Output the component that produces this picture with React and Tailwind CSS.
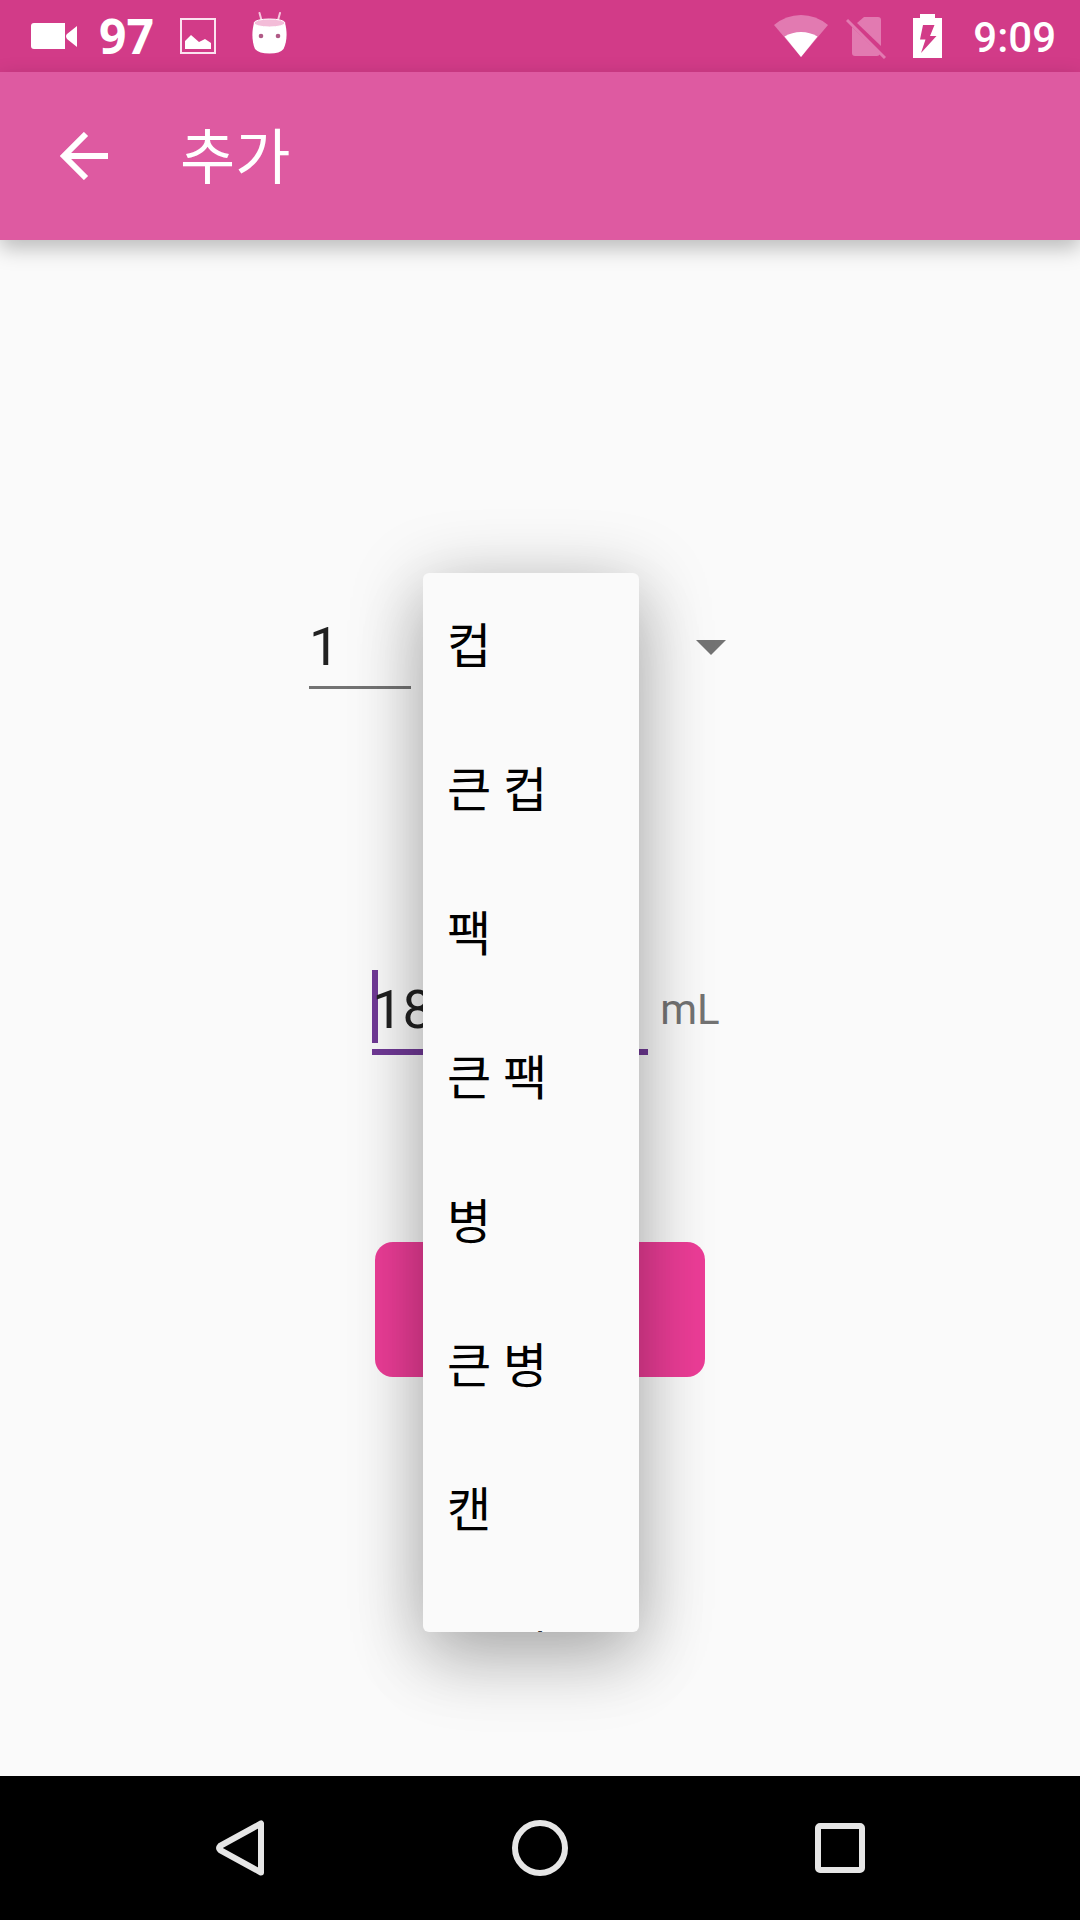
import { useState } from "react";

const UNITS = ["컵", "큰 컵", "팩", "큰 팩", "병", "큰 병", "캔", "큰 캔"];

function VideoIcon() {
  return (
    <svg className="h-[26px] w-[47px]" viewBox="0 0 47 26" fill="#fff" aria-hidden="true">
      <path d="M3 0H34V26H3Q0 26 0 23V3Q0 0 3 0Z" />
      <path d="M46 3V24L36 16Q34 13 36 11Z" />
    </svg>
  );
}

function PictureIcon() {
  return (
    <svg className="size-9" viewBox="0 0 36 36" aria-hidden="true">
      <rect x="1" y="1" width="34" height="34" fill="none" stroke="#fbe3f0" strokeWidth="2" />
      <path d="M5 31V23L11 17L19 24L25 21L31 25V31Z" fill="#fff" />
    </svg>
  );
}

function RobotIcon() {
  return (
    <svg className="h-[42px] w-[35px]" viewBox="0 0 35 42" aria-hidden="true">
      <path d="M7.500 1L10 10M28 1L25.500 10" stroke="#f6c6de" strokeWidth="2" strokeLinecap="round" />
      <path d="M2 11C-0.500 20 0 30 3 37Q7 41.500 17.500 41.500T31.500 37C35 30 35.500 20 33 11Z" fill="#fff" />
      <ellipse cx="17.500" cy="11" rx="15.500" ry="4" fill="#f3bcd8" stroke="#fff" strokeWidth="1" />
      <circle cx="9" cy="24" r="2.300" fill="#b05a86" />
      <circle cx="26" cy="24" r="2.300" fill="#b05a86" />
    </svg>
  );
}

function WifiIcon() {
  return (
    <svg className="h-[42px] w-[54px]" viewBox="0 0 54 42" aria-hidden="true">
      <path d="M0 10Q12 0 27 0T54 10L27 42Z" fill="#e27ab1" />
      <path d="M10.500 21.500Q18 17 27 17T43.500 21.500L27 42Z" fill="#fff" />
    </svg>
  );
}

function NoSimIcon() {
  return (
    <svg className="h-[42px] w-10" viewBox="0 0 40 42" aria-hidden="true">
      <path d="M18 0H32Q35 0 35 3V29L11 6Z" fill="#e27ab1" />
      <path d="M6 10L34 37Q33 39 31 39H9Q6 39 6 36Z" fill="#e27ab1" />
      <path d="M1 3L39 41" stroke="#e27ab1" strokeWidth="3" />
    </svg>
  );
}

function BatteryIcon() {
  return (
    <svg className="h-11 w-[29px]" viewBox="0 0 29 44" aria-hidden="true">
      <path d="M7 0H22V4H29V44H0V4H7Z" fill="#fff" />
      <path d="M10 11H21.500L17 22H23.500L8 39L12.500 25.500H7Z" fill="#d23b88" />
    </svg>
  );
}

function StatusBar() {
  return (
    <div className="flex h-[72px] items-center justify-between bg-[#d23b88] pr-6 pl-[31px] text-white">
      <div className="flex items-center">
        <VideoIcon />
        <span className="ml-[21px] w-[81px] font-['Open_Sans',sans-serif] text-[48px] leading-[72px] font-bold">97</span>
        <PictureIcon />
        <span className="mb-[6px] ml-9">
          <RobotIcon />
        </span>
      </div>
      <div className="flex items-center">
        <WifiIcon />
        <span className="mt-1 ml-[18px]">
          <NoSimIcon />
        </span>
        <span className="ml-[27px]">
          <BatteryIcon />
        </span>
        <span className="ml-[31px] pt-1 text-[42px] leading-[68px] font-medium">9:09</span>
      </div>
    </div>
  );
}

function Toolbar() {
  return (
    <header className="flex h-[168px] items-center bg-[#de5aa1] pl-12 text-white shadow-[0_8px_20px_rgba(0,0,0,0.26)]">
      <button type="button" aria-label="뒤로" className="flex size-[72px] items-center justify-center">
        <svg className="size-12" viewBox="0 0 48 48" fill="none" stroke="#fff" strokeWidth="6" aria-hidden="true">
          <path d="M48 24H5M26 2L4 24L26 46" />
        </svg>
      </button>
      <h1 className="ml-[60px] pt-1.5 text-[60px] leading-[72px]">추가</h1>
    </header>
  );
}

function UnitPicker() {
  const [unit, setUnit] = useState(UNITS[0]);
  return (
    <div className="relative flex w-[360px] items-center">
      <select
        aria-label="단위"
        value={unit}
        onChange={(e) => setUnit(e.target.value)}
        className="h-[84px] w-full appearance-none pl-6 text-[48px] outline-none"
      >
        {UNITS.map((u) => (
          <option key={u}>{u}</option>
        ))}
      </select>
      <svg className="pointer-events-none absolute right-[57px] h-[15px] w-[30px]" viewBox="0 0 30 15" aria-hidden="true">
        <path d="M0 0H30L15 15Z" fill="#737373" />
      </svg>
      <ul
        role="listbox"
        aria-label="단위"
        className="absolute -top-8 left-0 z-10 h-[1059px] w-[216px] overflow-hidden rounded-md bg-[#fafafa] shadow-[0_12px_72px_rgba(0,0,0,0.28),0_36px_72px_rgba(0,0,0,0.12)]"
      >
        {UNITS.map((u) => (
          <li key={u} role="option" aria-selected={u === unit}>
            <button
              type="button"
              onClick={() => setUnit(u)}
              className="h-36 w-full px-6 pt-1 text-left text-[48px] leading-[72px] whitespace-nowrap text-black"
            >
              {u}
            </button>
          </li>
        ))}
      </ul>
    </div>
  );
}

function NavBar() {
  return (
    <nav className="flex h-36 items-center justify-center bg-black px-[90px]">
      <button type="button" aria-label="뒤로" className="flex h-full flex-1 items-center justify-center">
        <svg className="size-14" viewBox="0 0 56 56" fill="none" stroke="#e6e6e6" strokeWidth="6" strokeLinejoin="round" aria-hidden="true">
          <path d="M49 3.500V52.500L8 30Q6 28 8 26Z" />
        </svg>
      </button>
      <button type="button" aria-label="홈" className="flex h-full flex-1 items-center justify-center">
        <span className="size-14 rounded-full border-6 border-[#e6e6e6]" />
      </button>
      <button type="button" aria-label="최근 앱" className="flex h-full flex-1 items-center justify-center">
        <span className="size-[50px] rounded-[5px] border-6 border-[#e6e6e6]" />
      </button>
    </nav>
  );
}

export default function App() {
  return (
    <div className="flex min-h-screen flex-col bg-[#fafafa] font-[Roboto,'Noto_Sans_CJK_KR',sans-serif] text-[#212121]">
      <StatusBar />
      <Toolbar />
      <main className="flex flex-1 flex-col items-center pt-[365px]">
        <div className="flex gap-3 pl-3">
          <input
            aria-label="수량"
            defaultValue="1"
            inputMode="numeric"
            className="h-[84px] w-[102px] border-b-3 border-[#737373] pt-0.5 text-[54px] outline-none"
          />
          <UnitPicker />
        </div>
        <div className="mt-[280px] flex items-center gap-3 pl-3">
          <div className="relative">
            <span className="absolute top-px left-0 h-[73px] w-[6px] bg-[#703a96]" />
            <input
              id="volume"
              defaultValue="180"
              inputMode="numeric"
              className="relative h-[86px] w-[276px] border-b-6 border-[#703a96] text-[54px] outline-none"
            />
          </div>
          <label htmlFor="volume" className="pb-1 text-[42px] leading-[60px] text-[#737373]">
            mL
          </label>
        </div>
        <button type="button" aria-label="추가" className="mt-[187px] h-[135px] w-[330px] rounded-[18px] bg-[#ec3d97]" />
      </main>
      <NavBar />
    </div>
  );
}
